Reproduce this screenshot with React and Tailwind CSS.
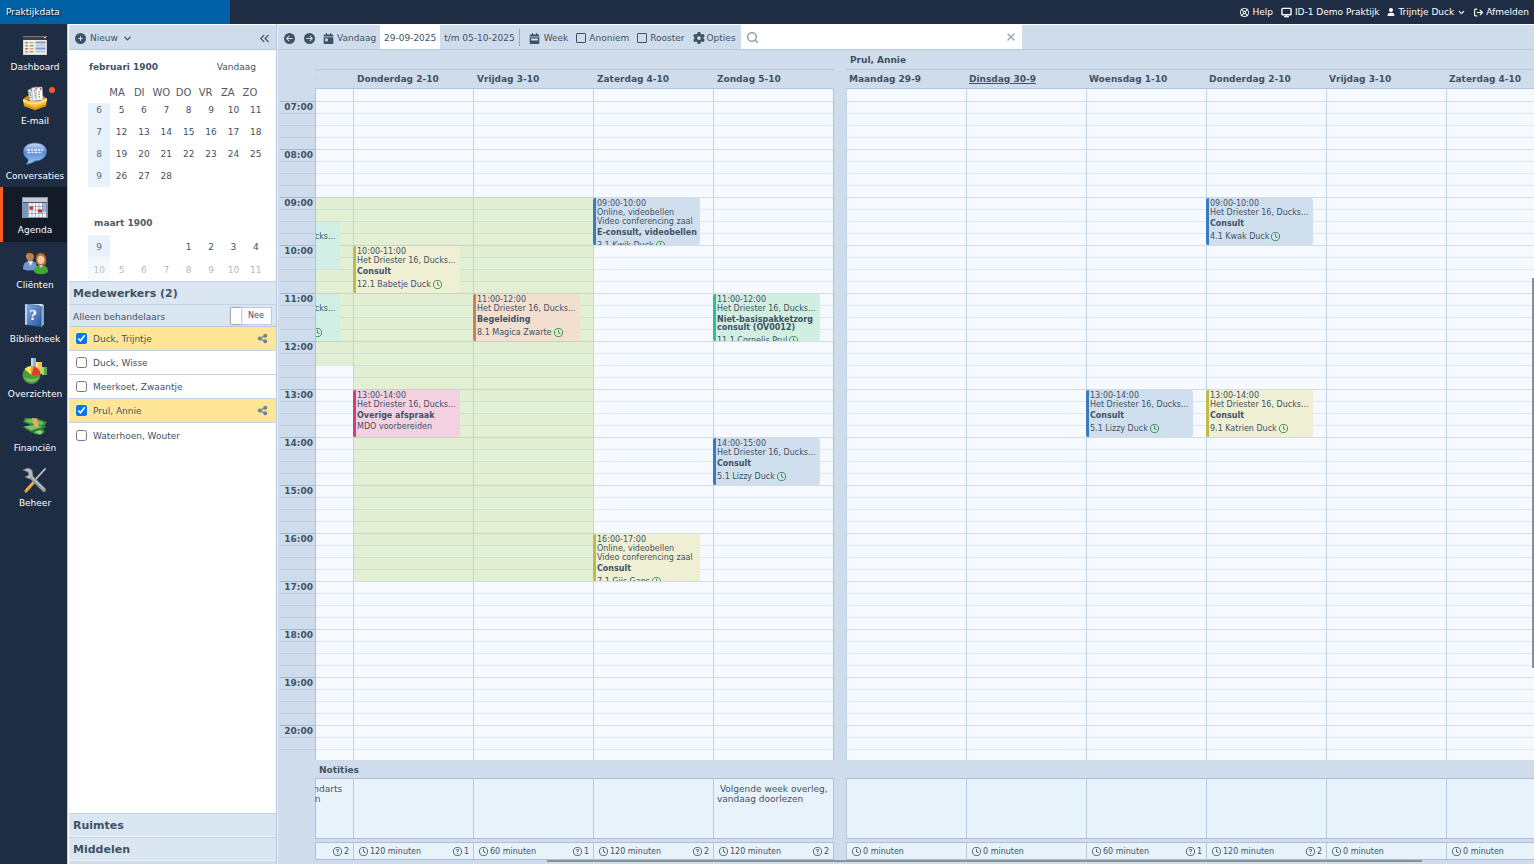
import React, { useState } from 'react'
import { ChevronDown, ChevronsLeft, Search, X, Monitor } from 'lucide-react'
import {
  FaCircleArrowLeft,
  FaCircleArrowRight,
  FaCirclePlus,
  FaCalendarDay,
  FaCalendarWeek,
  FaGear,
  FaShareNodes,
  FaRegLifeRing,
  FaUser,
  FaArrowRightFromBracket,
  FaRegClock,
  FaRegCircleQuestion,
} from 'react-icons/fa6'

/* ---------- Navigation icons ---------- */

const DashboardIcon = () => (
  <svg viewBox="0 0 26 26" className="w-[26px] h-[26px]" aria-hidden="true">
    <rect x="1" y="5" width="24" height="19" fill="#d4d6d6" />
    <rect x="1" y="5" width="24" height="4" fill="#3c3f42" />
    <rect x="1" y="5" width="24" height="1" fill="#777a7c" />
    <rect x="22" y="6" width="2" height="1" fill="#d8d8d8" />
    <rect x="2" y="9" width="22" height="14" fill="#efefec" />
    {[11, 14, 17, 20].map((y, i) => (
      <g key={y}>
        <rect x="3" y={y} width="3" height="1.500" fill={i % 2 ? '#d98b52' : '#d76a6a'} />
        <rect x="7.500" y={y} width="4" height="1.500" fill={i % 2 ? '#84b478' : '#d9ad5a'} />
        <rect x="13.500" y={y - 0.5} width="10" height="2" fill={i % 2 ? '#b4c6df' : '#7f9cc8'} />
      </g>
    ))}
  </svg>
)

const MailIcon = () => (
  <svg viewBox="0 0 26 26" className="w-[26px] h-[26px]" aria-hidden="true">
    <path d="M2 13 L7 10 H20 L24 13 V15 H2 Z" fill="#c98d17" />
    <path d="M6 5 L11 3.500 L13 16 L8 16 Z" fill="#e4e5e7" stroke="#a9adb3" strokeWidth=".6" />
    <path d="M9.500 3 L15 2 L17 15 L11 16 Z" fill="#f2f2f2" stroke="#a9adb3" strokeWidth=".6" />
    <path d="M14 2.500 L20 2 L21 15 L15 15.500 Z" fill="#fafafa" stroke="#a9adb3" strokeWidth=".6" />
    <path d="M8 7 L9 13 M12.500 5 L13.500 13 M17 6 L17.500 13" stroke="#7d8794" strokeWidth="1.200" strokeDasharray="1.500 1" />
    <path d="M18.500 3 V5 M14 3 V4.500 M9.500 4.500 V6" stroke="#cf4545" strokeWidth="1.200" />
    <path d="M1 14 L8 16 H18 L25 13 L24 21 L13 25 L2 21 Z" fill="#f6b92c" />
    <path d="M1 14 L8 17 H17 L25 13 V16 L17 19.500 H9 L1 16.500 Z" fill="#ffdf78" />
    <path d="M2 21 L13 25 L24 21 V19 L13 23 L2 19 Z" fill="#d8941a" />
  </svg>
)

const ChatIcon = () => (
  <svg viewBox="0 0 26 26" className="w-[26px] h-[26px]" aria-hidden="true">
    <defs>
      <linearGradient id="bubble" x1="0" y1="0" x2="0" y2="1">
        <stop offset="0" stopColor="#c9dcf7" />
        <stop offset=".45" stopColor="#5b8ad6" />
        <stop offset="1" stopColor="#a4c6f5" />
      </linearGradient>
    </defs>
    <path d="M13 3 C20 3 24.500 6.500 24.500 11.500 C24.500 17 19 21 13 21 C11 22.500 8 24 4 24 C6 22.500 6.500 21 6 19 C3 17.500 1.500 14.500 1.500 11.500 C1.500 6.500 6 3 13 3 Z" fill="url(#bubble)" stroke="#4b76bb" strokeWidth=".7" />
    <path d="M5 10 H21 M5.500 12.500 H20" stroke="#eef5ff" strokeWidth="1.400" strokeDasharray="3 1 2 1" />
  </svg>
)

const AgendaIcon = () => (
  <svg viewBox="0 0 26 26" className="w-[26px] h-[26px]" aria-hidden="true">
    <rect x="0" y="3" width="26" height="21" fill="#8791a0" />
    <rect x="1" y="4" width="24" height="4" fill="#c7ccd4" />
    <rect x="1" y="8" width="24" height="1" fill="#4c5665" />
    <rect x="2" y="9" width="22" height="14" fill="#f5f7fa" />
    <rect x="2" y="9" width="4" height="14" fill="#6f96cb" />
    <rect x="20" y="9" width="4" height="9" fill="#9db8de" />
    <path d="M2 12.500 H24 M2 16 H24 M2 19.500 H24 M6.500 9 V23 M10 9 V23 M13.500 9 V23 M17 9 V23 M20.500 9 V23" stroke="#8d9bb0" strokeWidth=".7" />
    <rect x="7.500" y="12.500" width="3.500" height="3" fill="#d22b20" />
    <rect x="16" y="15.500" width="4" height="3" fill="#d22b20" />
  </svg>
)

const ClientsIcon = () => (
  <svg viewBox="0 0 26 26" className="w-[26px] h-[26px]" aria-hidden="true">
    <path d="M1 20 C1 14 4 12 8 12 C13 12 15 14 15 20 C10 22 5 22 1 20 Z" fill="#6e97d6" />
    <path d="M6 12 L8.500 17 L11 12 Z" fill="#f3f6fb" />
    <ellipse cx="8" cy="7" rx="4" ry="5.500" fill="#b8835a" />
    <path d="M3.500 7 C3 2 6 0 8.500 .5 C12 1 13 4 12 7 C11 4 9 4 7 4 C5 4 4.500 5 3.500 7 Z" fill="#3a2a20" />
    <path d="M12 23 C12 18 15 16 19 16 C23.500 16 26 18 26 23 C22 26 16 26 12 23 Z" fill="#46a632" />
    <path d="M14 14 C13 6 16 3.500 19 4 C23 4 25 8 24 15 C21 18 17 17 14 14 Z" fill="#b0652a" />
    <ellipse cx="19" cy="10.500" rx="3.500" ry="4.500" fill="#f1c7a0" />
    <path d="M15.500 9 C17 6 20 6 22.500 9 C22 5 16 4 15.500 9 Z" fill="#c97a36" />
    <path d="M17 16 L19 19 L21 16 Z" fill="#f1c7a0" />
  </svg>
)

const LibraryIcon = () => (
  <svg viewBox="0 0 26 26" className="w-[26px] h-[26px]" aria-hidden="true">
    <defs>
      <linearGradient id="book" x1="0" y1="0" x2="1" y2="1">
        <stop offset="0" stopColor="#86b0e2" />
        <stop offset="1" stopColor="#285a9f" />
      </linearGradient>
    </defs>
    <path d="M3 1 H20 L22 2 V21 L19 24 L17 22 H3 Z" fill="#dfe7f0" />
    <path d="M19 3 L22 2 V20 L19 24 Z" fill="#86a6cd" />
    <path d="M3 1 L17 2.500 L19 4 V24 L3 21.500 Z" fill="url(#book)" stroke="#1e4b86" strokeWidth=".5" />
    <path d="M3 1 L5 1.200 V21.800 L3 21.500 Z" fill="#b7d0ee" />
    <text x="7" y="17" fontSize="13" fontWeight="bold" fill="#fff" fontFamily="DejaVu Serif, serif">?</text>
  </svg>
)

const ReportsIcon = () => (
  <svg viewBox="0 0 26 26" className="w-[26px] h-[26px]" aria-hidden="true">
    <rect x="9" y="0" width="5" height="13" fill="#8fb4e8" />
    <rect x="9" y="0" width="2" height="13" fill="#c3d9f6" />
    <rect x="14" y="4" width="6" height="12" fill="#f3c540" />
    <rect x="14" y="4" width="2" height="12" fill="#ffe794" />
    <rect x="20" y="9" width="5" height="8" fill="#57a944" />
    <rect x="20" y="9" width="2" height="8" fill="#a1d58f" />
    <circle cx="9.500" cy="17" r="9" fill="#4a9d3b" />
    <path d="M2 19 C4 25 14 26 17 19 C12 22 7 22 2 19 Z" fill="#7cc265" />
    <path d="M9.500 17 L2.500 11 A9 9 0 0 1 9.500 8 Z" fill="#ffe05c" />
    <path d="M9.500 17 L11.500 8.500 A9 9 0 0 1 18.500 17 Z" fill="#e23a2e" />
    <path d="M9.500 17 V8 L12 8.500 Z" fill="#f39a3c" />
  </svg>
)

const FinanceIcon = () => (
  <svg viewBox="0 0 26 26" className="w-[26px] h-[26px]" aria-hidden="true">
    <path d="M10 18 L20 15 L23 20 L19 23 L12 22 Z" fill="#2f8a3c" />
    <path d="M12 20 C15 17 19 18 21 20 L18 22.500 Z" fill="#93cf86" />
    <path d="M0 15 L16 12 L25 15 L10 21 Z" fill="#2c7a33" />
    <path d="M2 14.500 L17 12 L22 14.500 L9 18.500 Z" fill="#7fc173" />
    <path d="M3 6 L14 6 L25 10 L22 15 L9 13 L1 10 Z" fill="#2f8a3a" />
    <path d="M5 7 L13 7 L22 10.500 L20 13 L10 11.500 L3 9.500 Z" fill="#6cbf60" />
    <path d="M10 6 L15 6.500 L17 15 L12 14 Z" fill="#f2a760" />
  </svg>
)

const ToolsIcon = () => (
  <svg viewBox="0 0 26 26" className="w-[26px] h-[26px]" aria-hidden="true">
    <path d="M23 2 L13 13" stroke="#c4c8cc" strokeWidth="1.800" strokeLinecap="round" />
    <path d="M12 15 L4 24" stroke="#e8982a" strokeWidth="3.200" strokeLinecap="round" />
    <path d="M11.500 15 L4 23" stroke="#ffd07c" strokeWidth="1" />
    <path d="M9 10 L22 23" stroke="#8f9498" strokeWidth="4" strokeLinecap="round" />
    <path d="M9 9.500 L22 22" stroke="#c3c7c9" strokeWidth="1.200" />
    <path d="M1 3 L6 1 L10 3 L11 9 L8 12 L3 10 L7 8 L6 5 Z" fill="#b5babd" stroke="#7c8184" strokeWidth=".6" />
  </svg>
)

const navItems = [
  { label: 'Dashboard', icon: <DashboardIcon /> },
  { label: 'E-mail', icon: <MailIcon />, badge: true },
  { label: 'Conversaties', icon: <ChatIcon /> },
  { label: 'Agenda', icon: <AgendaIcon />, active: true },
  { label: 'Cliënten', icon: <ClientsIcon /> },
  { label: 'Bibliotheek', icon: <LibraryIcon /> },
  { label: 'Overzichten', icon: <ReportsIcon /> },
  { label: 'Financiën', icon: <FinanceIcon /> },
  { label: 'Beheer', icon: <ToolsIcon /> },
]

/* ---------- Data ---------- */

const employees = [
  { name: 'Duck, Trijntje', checked: true },
  { name: 'Duck, Wisse', checked: false },
  { name: 'Meerkoet, Zwaantje', checked: false },
  { name: 'Prul, Annie', checked: true },
  { name: 'Waterhoen, Wouter', checked: false },
]

const weekdays = ['MA', 'DI', 'WO', 'DO', 'VR', 'ZA', 'ZO']

const february = [
  [6, 5, 6, 7, 8, 9, 10, 11],
  [7, 12, 13, 14, 15, 16, 17, 18],
  [8, 19, 20, 21, 22, 23, 24, 25],
  [9, 26, 27, 28, '', '', '', ''],
]

const march = [
  [9, '', '', '', 1, 2, 3, 4],
  [10, 5, 6, 7, 8, 9, 10, 11],
]

const HOUR = 48
const DAY_START = 6.75
const SLOTS = 56

const colors = {
  blue: 'bg-[#d0dfee] border-[#3a7cc0]',
  yellow: 'bg-[#efefd3] border-[#bdbb4b]',
  orange: 'bg-[#f2dfd0] border-[#c8824a]',
  green: 'bg-[#d0efe1] border-[#2fbf92]',
  mint: 'bg-[#d1efe6] border-[#2fbf92]',
  pink: 'bg-[#f3d1e1] border-[#cf3f7c]',
}

const address = ['Het Driester 16, Ducks...']
const online = ['Online, videobellen', 'Video conferencing zaal']

const agendas = [
  {
    name: '',
    align: 'justify-end',
    size: 'w-[519px] shrink-0',
    frame: 'border-x',
    days: [
      {
        title: 'Woensdag 1-10',
        work: [9, 12.5],
        note: ' Ochtend naar tandarts afspraak afzeggen',
        minutes: 120,
        open: 2,
        events: [
          { start: 9.5, time: '09:30-10:30', place: address, type: 'Consult', client: '4.1 Kwak', color: 'mint' },
          { start: 11, time: '11:00-12:00', place: address, type: 'Consult', client: '12.1 Babetje Duck', color: 'mint' },
        ],
      },
      {
        title: 'Donderdag 2-10',
        work: [9, 17],
        minutes: 120,
        open: 1,
        events: [
          { start: 10, time: '10:00-11:00', place: address, type: 'Consult', client: '12.1 Babetje Duck', color: 'yellow' },
          { start: 13, time: '13:00-14:00', place: address, type: 'Overige afspraak', remark: 'MDO voorbereiden', color: 'pink' },
        ],
      },
      {
        title: 'Vrijdag 3-10',
        work: [9, 17],
        minutes: 60,
        open: 1,
        events: [
          { start: 11, time: '11:00-12:00', place: address, type: 'Begeleiding', client: '8.1 Magica Zwarte', color: 'orange' },
        ],
      },
      {
        title: 'Zaterdag 4-10',
        minutes: 120,
        open: 2,
        events: [
          { start: 9, time: '09:00-10:00', place: online, type: 'E-consult, videobellen', client: '3.1 Kwik Duck', color: 'blue' },
          { start: 16, time: '16:00-17:00', place: online, type: 'Consult', client: '7.1 Gijs Gans', color: 'yellow' },
        ],
      },
      {
        title: 'Zondag 5-10',
        note: ' Volgende week overleg, vandaag doorlezen',
        minutes: 120,
        open: 2,
        events: [
          { start: 11, time: '11:00-12:00', place: address, type: 'Niet-basispakketzorg consult (OV0012)', client: '11.1 Cornelis Prul', color: 'green' },
          { start: 14, time: '14:00-15:00', place: address, type: 'Consult', client: '5.1 Lizzy Duck', color: 'blue' },
        ],
      },
    ],
  },
  {
    name: 'Prul, Annie',
    align: '',
    size: 'min-w-0 flex-1',
    frame: '',
    days: [
      { title: 'Maandag 29-9', minutes: 0, events: [] },
      { title: 'Dinsdag 30-9', today: true, minutes: 0, events: [] },
      {
        title: 'Woensdag 1-10',
        minutes: 60,
        open: 1,
        events: [
          { start: 13, time: '13:00-14:00', place: address, type: 'Consult', client: '5.1 Lizzy Duck', color: 'blue' },
        ],
      },
      {
        title: 'Donderdag 2-10',
        minutes: 120,
        open: 2,
        events: [
          { start: 9, time: '09:00-10:00', place: address, type: 'Consult', client: '4.1 Kwak Duck', color: 'blue' },
          { start: 13, time: '13:00-14:00', place: address, type: 'Consult', client: '9.1 Katrien Duck', color: 'yellow' },
        ],
      },
      { title: 'Vrijdag 3-10', minutes: 0, events: [] },
      { title: 'Zaterdag 4-10', minutes: 0, events: [] },
    ],
  },
]

/* ---------- Top bar and navigation ---------- */

const TopBar = () => (
  <header className="flex h-6 shrink-0 items-center justify-between bg-[#1e2d43] text-white">
    <div className="flex h-full w-[230px] items-center bg-[#0061a7] pl-[6px] font-medium [text-shadow:1px_1px_2px_#000]">
      Praktijkdata
    </div>
    <div className="flex items-center gap-2 pr-[5px]">
      <a href="#help" className="flex items-center gap-[3px]">
        <FaRegLifeRing className="w-[9px] h-[9px]" />
        Help
      </a>
      <a href="#praktijk" className="flex items-center gap-[3px]">
        <Monitor className="w-[11px] h-[11px]" strokeWidth={3} />
        ID-1 Demo Praktijk
      </a>
      <button className="flex items-center gap-[3px]">
        <FaUser className="w-[8px] h-[8px]" />
        Trijntje Duck
        <ChevronDown className="w-[9px] h-[9px]" strokeWidth={3} />
      </button>
      <a href="#afmelden" className="flex items-center gap-[3px]">
        <FaArrowRightFromBracket className="w-[9px] h-[9px]" />
        Afmelden
      </a>
    </div>
  </header>
)

const MainNav = () => (
  <nav className="w-[67px] shrink-0 bg-[#1e2d43] text-white">
    <div className="grid h-[490px] grid-rows-9">
      {navItems.map((item) => (
        <a
          key={item.label}
          href="#nav"
          className={`relative flex flex-col items-center border-l-[3px] pt-[7px] ${
            item.active ? 'border-[#ff5a26] bg-[#131b29]' : 'border-transparent'
          }`}
        >
          {item.icon}
          <span className="leading-5">{item.label}</span>
          {item.badge && <span className="absolute top-[9px] right-[12px] w-[6px] h-[6px] rounded-full bg-[#ff5a26]" />}
        </a>
      ))}
    </div>
  </nav>
)

/* ---------- Side panel ---------- */

const Weeks = ({ rows, rowClass }) => (
  <tbody>
    {rows.map((row) => (
      <tr key={row[0]} className={rowClass}>
        {row.map((day, i) => (
          <td key={i} className={i === 0 ? 'bg-[#e8f2fb] text-[#5b6b7a]' : ''}>
            {day}
          </td>
        ))}
      </tr>
    ))}
  </tbody>
)

const MiniCalendar = () => (
  <div className="h-[231px] shrink-0 overflow-hidden bg-white pl-[19px] pr-[9px]">
    <div className="flex items-center justify-between pt-[11px] pl-px pr-[11px]">
      <span className="font-bold leading-3">februari 1900</span>
      <button className="leading-3">Vandaag</button>
    </div>
    <div className="flex pt-[14px] pl-[18px] pr-[6px] text-[10px] leading-3 text-[#4f5b66]">
      {weekdays.map((day) => (
        <span key={day} className="flex-1 text-center">
          {day}
        </span>
      ))}
    </div>
    <div className="relative h-[178px] overflow-hidden mt-1">
      <table className="-mt-1 w-full table-fixed text-center">
        <Weeks rows={february} rowClass="h-[22px]" />
      </table>
      <div className="pt-[30px] pb-[6px] pl-[6px] font-bold leading-3 text-[#4f5b66]">maart 1900</div>
      <table className="w-full table-fixed text-center">
        <Weeks rows={march} rowClass="h-[23px]" />
      </table>
      <div className="absolute inset-x-0 bottom-0 h-[24px] bg-linear-to-b from-white/40 to-white/75" />
    </div>
  </div>
)

const SidePanel = () => {
  const [list, setList] = useState(employees)

  const toggle = (name) => {
    setList(list.map((e) => (e.name === name ? { ...e, checked: !e.checked } : e)))
  }

  return (
    <aside className="flex w-[210px] shrink-0 flex-col border-x border-[#b9c9de] bg-white pl-px">
      <div className="flex h-[26px] shrink-0 items-center justify-between border-t border-t-white border-b border-b-[#b9c8dc] bg-[#cfdceb] pt-[2px] pl-[6px] pr-[4px]">
        <button className="flex items-center gap-1">
          <FaCirclePlus className="w-[11px] h-[11px]" />
          Nieuw
          <ChevronDown className="w-[11px] h-[11px]" strokeWidth={3} />
        </button>
        <button aria-label="Paneel inklappen">
          <ChevronsLeft className="w-[15px] h-[15px]" strokeWidth={2} />
        </button>
      </div>

      <MiniCalendar />

      <h2 className="h-6 shrink-0 border-y border-[#c3d2e3] bg-[#dbe6f3] pl-1 text-[11px] leading-[24px] font-bold">
        Medewerkers (2)
      </h2>
      <div className="flex h-[22px] shrink-0 items-center justify-between border-b border-[#b9c9de] bg-[#dbe6f3] pl-1 pr-1">
        <span className="pt-[2px]">Alleen behandelaars</span>
        <button
          role="switch"
          aria-checked="false"
          aria-label="Alleen behandelaars"
          className="flex h-[18px] w-[42px] items-center border border-[#bccadb] bg-[#fbfcfd] text-[8px]"
        >
          <span className="h-full w-[10px] bg-white shadow-[0_0_2px_#667]" />
          <span className="flex-1 text-center">Nee</span>
        </button>
      </div>

      <ul className="flex-1">
        {list.map((e) => (
          <li key={e.name} className={`flex h-6 items-center pl-[7px] pr-[8px] ${e.checked ? 'bg-[#ffe697]' : ''} border-b border-[#c5d3e6] last:border-transparent last:h-[26px]`}>
            <label className="flex flex-1 items-center gap-[6px]">
              <input type="checkbox" checked={e.checked} onChange={() => toggle(e.name)} className="w-[11px] h-[11px]" />
              {e.name}
            </label>
            {e.checked && <FaShareNodes className="w-[11px] h-[11px] text-[#728596]" />}
          </li>
        ))}
      </ul>

      {['Ruimtes', 'Middelen'].map((title) => (
        <h2 key={title} className="h-6 shrink-0 border-y border-t-[#c3d2e3] border-b-[#eef4fa] bg-[#dbe6f3] pl-1 text-[11px] leading-[24px] font-bold">
          {title}
        </h2>
      ))}
      <div className="h-[3px] shrink-0 bg-[#cfdceb]" />
    </aside>
  )
}

/* ---------- Agenda ---------- */

const Check = ({ label }) => (
  <label className="flex items-center gap-[3px]">
    <input type="checkbox" className="w-[10px] h-[10px] appearance-none rounded-[1px] border border-[#3f5264] checked:bg-[#3f5264]" />
    {label}
  </label>
)

const Toolbar = () => (
  <div className="flex h-[26px] shrink-0 items-center border-t border-t-white border-b border-b-[#b9c8dc] pl-[6px]">
    <div className="flex items-center pt-[2px]">
      <button aria-label="Vorige" className="mr-[9px]">
        <FaCircleArrowLeft className="w-[11px] h-[11px]" />
      </button>
      <button aria-label="Volgende" className="mr-[8px]">
        <FaCircleArrowRight className="w-[11px] h-[11px]" />
      </button>
      <button className="flex items-center gap-[3px]">
        <FaCalendarDay className="w-[11px] h-[11px]" />
        Vandaag
      </button>
    </div>
    <input aria-label="Datum" defaultValue="29-09-2025" className="ml-1 mr-1 h-full w-[60px] bg-white pt-[2px] text-center" />
    <span className="pt-[2px]">t/m 05-10-2025</span>
    <span className="mx-1 h-[17px] w-px bg-[#a3a9b3]" />
    <div className="ml-[5px] flex items-center gap-2 pt-[2px]">
      <button className="flex items-center gap-1">
        <FaCalendarWeek className="w-[11px] h-[11px]" />
        Week
      </button>
      <Check label="Anoniem" />
      <Check label="Rooster" />
      <button className="flex items-center gap-[2px]">
        <FaGear className="w-[12px] h-[12px]" />
        Opties
      </button>
    </div>
    <div className="ml-[5px] flex h-full w-[281px] items-center bg-white px-[5px] text-[#9aa5b0]">
      <Search className="w-[13px] h-[13px]" strokeWidth={3} />
      <input type="search" aria-label="Zoeken" className="min-w-0 flex-1 outline-none" />
      <button aria-label="Wissen">
        <X className="w-[12px] h-[12px]" strokeWidth={3} />
      </button>
    </div>
  </div>
)

const Event = ({ event }) => (
  <div
    className={`absolute -left-px h-[47px] w-[107px] overflow-hidden rounded-[2px] border-l-[3px] pt-px pl-px pr-[2px] text-[8px] ${colors[event.color]}`}
    style={{ top: (event.start - DAY_START) * HOUR + 1 }}
  >
    <div className="leading-[9px]">{event.time}</div>
    {event.place.map((line) => (
      <div key={line} className="leading-[9px] whitespace-nowrap">
        {line}
      </div>
    ))}
    <div className="mt-[3px] font-bold leading-[8px]">{event.type}</div>
    {event.remark && <div className="mt-[2px] leading-[10px]">{event.remark}</div>}
    {event.client && (
      <div className="mt-1 flex items-start gap-[2px] leading-[10px] whitespace-nowrap">
        {event.client}
        <FaRegClock className="w-[9px] h-[9px] shrink-0 text-[#1d8a35]" />
      </div>
    )}
  </div>
)

const isWorking = (work, hour) => work && hour >= work[0] && hour < work[1]

const slotBorder = (i) => {
  if (i === 0) return 'border-transparent'
  return i % 4 === 1 ? 'border-[#8096a8]/30' : 'border-[#9fbfe0]/30'
}

const DayColumn = ({ day }) => (
  <div className="relative w-[120px] shrink-0 border-l border-[#c1d4e5]">
    {Array.from({ length: SLOTS }, (_, i) => (
      <div key={i} className={`h-3 border-t ${slotBorder(i)} ${isWorking(day.work, DAY_START + i / 4) ? 'bg-[#e3efd3]' : ''}`} />
    ))}
    {day.events.map((event) => (
      <Event key={event.time} event={event} />
    ))}
  </div>
)

const AgendaGroup = ({ agenda }) => (
  <section className={`flex flex-col overflow-hidden ${agenda.size}`}>
    <div className="h-5 shrink-0 border-b border-[#b9c8dc] pl-1 font-bold leading-[20px]">{agenda.name}</div>
    <div className={`flex h-[19px] shrink-0 border-b border-[#afc6e0] ${agenda.align}`}>
      {agenda.days.map((day) => (
        <div key={day.title} className={`w-[120px] shrink-0 pl-[3px] font-bold leading-[18px] whitespace-nowrap ${day.today ? 'underline' : ''}`}>
          {day.title}
        </div>
      ))}
    </div>
    <div className={`flex min-h-0 flex-1 overflow-hidden border-[#a9c3de] bg-[#f6f9fe] ${agenda.frame} ${agenda.align}`}>
      {agenda.days.map((day) => (
        <DayColumn key={day.title} day={day} />
      ))}
    </div>
    <div className="h-[18px] shrink-0 pl-1 font-bold leading-[20px]">{agenda.name ? '' : 'Notities'}</div>
    <div className={`flex h-[61px] shrink-0 border-y border-[#aebfd6] bg-[#e8f2fb] ${agenda.frame} ${agenda.align}`}>
      {agenda.days.map((day) => (
        <div key={day.title} className="w-[120px] shrink-0 border-l border-[#b8c8dc] pt-[5px] pl-[3px] leading-[10px] whitespace-pre-wrap">
          {day.note}
        </div>
      ))}
    </div>
    <div className={`mt-[3px] mb-1 flex h-[18px] shrink-0 border-y border-[#aebfd6] bg-[#e8f2fb] ${agenda.frame} ${agenda.align}`}>
      {agenda.days.map((day) => (
        <div key={day.title} className="flex w-[120px] shrink-0 items-center justify-between border-l border-[#b8c8dc] pt-px pl-[5px] pr-1 text-[8px] leading-[10px]">
          <span className="flex items-start gap-[2px]">
            <FaRegClock className="w-[9px] h-[9px]" />
            {day.minutes} minuten
          </span>
          {day.open && (
            <span className="flex items-start gap-[2px]">
              <FaRegCircleQuestion className="w-[9px] h-[9px]" />
              {day.open}
            </span>
          )}
        </div>
      ))}
    </div>
  </section>
)

const TimeGutter = () => (
  <div className="flex w-[37px] shrink-0 flex-col pl-[2px]">
    <div className="h-[39px] shrink-0" />
    <div className="min-h-0 flex-1 overflow-hidden">
      {Array.from({ length: SLOTS }, (_, i) => {
        const full = i % 4 === 1
        const hour = String(7 + (i - 1) / 4).padStart(2, '0')
        const border = full ? 'border-[#a4bad6]' : 'border-[#bfcfe0]'
        return (
          <div key={i} className={`h-3 border-t pr-[2px] text-right font-bold leading-[10px] ${i === 0 ? 'border-transparent' : border}`}>
            {full && `${hour}:00`}
          </div>
        )
      })}
    </div>
    <div className="h-[104px] shrink-0" />
  </div>
)

const App = () => (
  <div className="flex h-screen flex-col overflow-hidden bg-[#cfdceb] font-['DejaVu_Sans',Verdana,sans-serif] text-[9px] leading-3 text-[#3f5264]">
    <TopBar />
    <div className="flex min-h-0 flex-1">
      <MainNav />
      <SidePanel />
      <main className="relative flex min-w-0 flex-1 flex-col border-l border-[#e6eef7]">
        <Toolbar />
        <div className="flex min-h-0 flex-1">
          <TimeGutter />
          <AgendaGroup agenda={agendas[0]} />
          <div className="w-3 shrink-0" />
          <AgendaGroup agenda={agendas[1]} />
        </div>
        {/* Scroll thumbs */}
        <div className="absolute right-0 top-[254px] h-[390px] w-[2px] bg-[#8b9097]" />
        <div className="absolute bottom-[2px] left-[269px] right-[112px] h-[2px] bg-[#8b9199]" />
      </main>
    </div>
  </div>
)

export default App
